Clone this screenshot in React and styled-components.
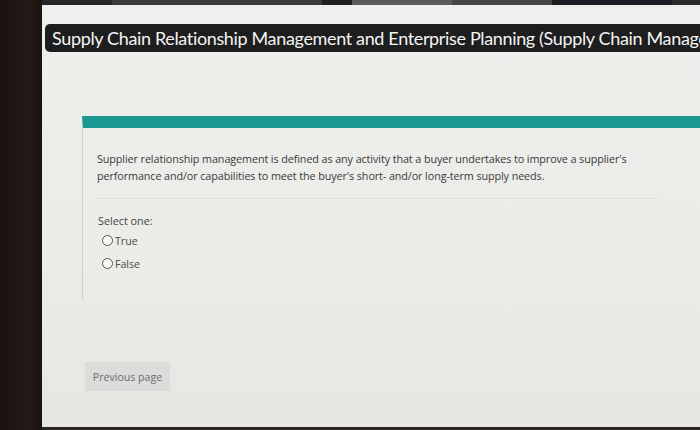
import React from "react";
import styled, { createGlobalStyle } from "styled-components";

const Global = createGlobalStyle`
  html, body {
    margin: 0;
    padding: 0;
    background: #1d1311;
  }
  body {
    font-family: "Open Sans", "Noto Sans", sans-serif;
  }
`;

const Frame = styled.div`
  display: flex;
  width: 700px;
  height: 430px;
  overflow: hidden;
  background: #1d1311;
`;

const Bezel = styled.div`
  width: 42px;
  flex: none;
  background: linear-gradient(90deg, #1a1210 0%, #241916 70%, #1b1311 100%);
`;

const Screen = styled.div`
  flex: 1;
  display: flex;
  flex-direction: column;
  background: linear-gradient(180deg, #efefed 0%, #ebebe8 60%, #e6e7e3 100%);
  border-bottom: 3px solid #2a2624;
  overflow: hidden;
`;

const TopStrip = styled.div`
  height: 5px;
  display: flex;
  background: #2b2b2d;
`;

const StripPart = styled.div`
  width: ${(p) => p.$w}px;
  background: ${(p) => p.$c};
`;

const TitleBar = styled.div`
  margin: 19px 0 0 3px;
  height: 28px;
  display: flex;
  align-items: center;
  padding-left: 7px;
  background: #1e1e1e;
  border-radius: 5px 0 0 5px;
  white-space: nowrap;
  overflow: hidden;
  color: #f4f4f4;
  font-family: Lato, "Open Sans", sans-serif;
  font-size: 18px;
  letter-spacing: -0.35px;
`;

const Card = styled.section`
  box-sizing: border-box;
  margin: 64px 0 0 40px;
  border-top: 12px solid #1b9890;
  border-left: 1px solid #cfd0cd;
  height: 184px;
  padding: 22px 0 0 14px;
  display: flex;
  flex-direction: column;
`;

const Question = styled.p`
  margin: 0;
  font-size: 10.8px;
  line-height: 17px;
  color: #3a3a3a;
  letter-spacing: -0.1px;
  padding-bottom: 14px;
  border-bottom: 1px solid #dddedb;
  width: 560px;
`;

const Prompt = styled.div`
  margin-top: 14px;
  font-size: 10.8px;
  color: #444;
  padding-left: 1px;
`;

const Options = styled.div`
  display: flex;
  flex-direction: column;
  gap: 8px;
  margin-top: 5px;
  padding-left: 5px;
`;

const Option = styled.label`
  display: flex;
  align-items: center;
  gap: 2px;
  font-size: 10.6px;
  color: #4a4a4a;
  height: 15px;
`;

const Radio = styled.span`
  width: 9px;
  height: 9px;
  border: 1.3px solid #555;
  border-radius: 50%;
  background: #f6f6f4;
`;

const Nav = styled.div`
  margin: 62px 0 0 43px;
`;

const PrevButton = styled.button`
  width: 85px;
  height: 29px;
  border: none;
  background: #dcdcda;
  color: #6c6c6c;
  font-family: "Open Sans", "Noto Sans", sans-serif;
  font-size: 10.6px;
  padding: 0;
`;

export default function App() {
  return (
    <>
      <Global />
      <Frame>
        <Bezel />
        <Screen>
          <TopStrip>
            <StripPart $w={70} $c="#252527" />
            <StripPart $w={210} $c="#3a3a3c" />
            <StripPart $w={30} $c="#1f1f21" />
            <StripPart $w={100} $c="#5a5a5a" />
            <StripPart $w={100} $c="#454545" />
            <StripPart $w={120} $c="#1c1c22" />
          </TopStrip>
          <TitleBar>
            Supply Chain Relationship Management and Enterprise Planning (Supply Chain Management)
          </TitleBar>
          <Card>
            <Question>
              Supplier relationship management is defined as any activity that a buyer undertakes to improve a supplier's performance and/or capabilities to meet the buyer's short- and/or long-term supply needs.
            </Question>
            <Prompt>Select one:</Prompt>
            <Options>
              <Option>
                <Radio />
                True
              </Option>
              <Option>
                <Radio />
                False
              </Option>
            </Options>
          </Card>
          <Nav>
            <PrevButton>Previous page</PrevButton>
          </Nav>
        </Screen>
      </Frame>
    </>
  );
}
